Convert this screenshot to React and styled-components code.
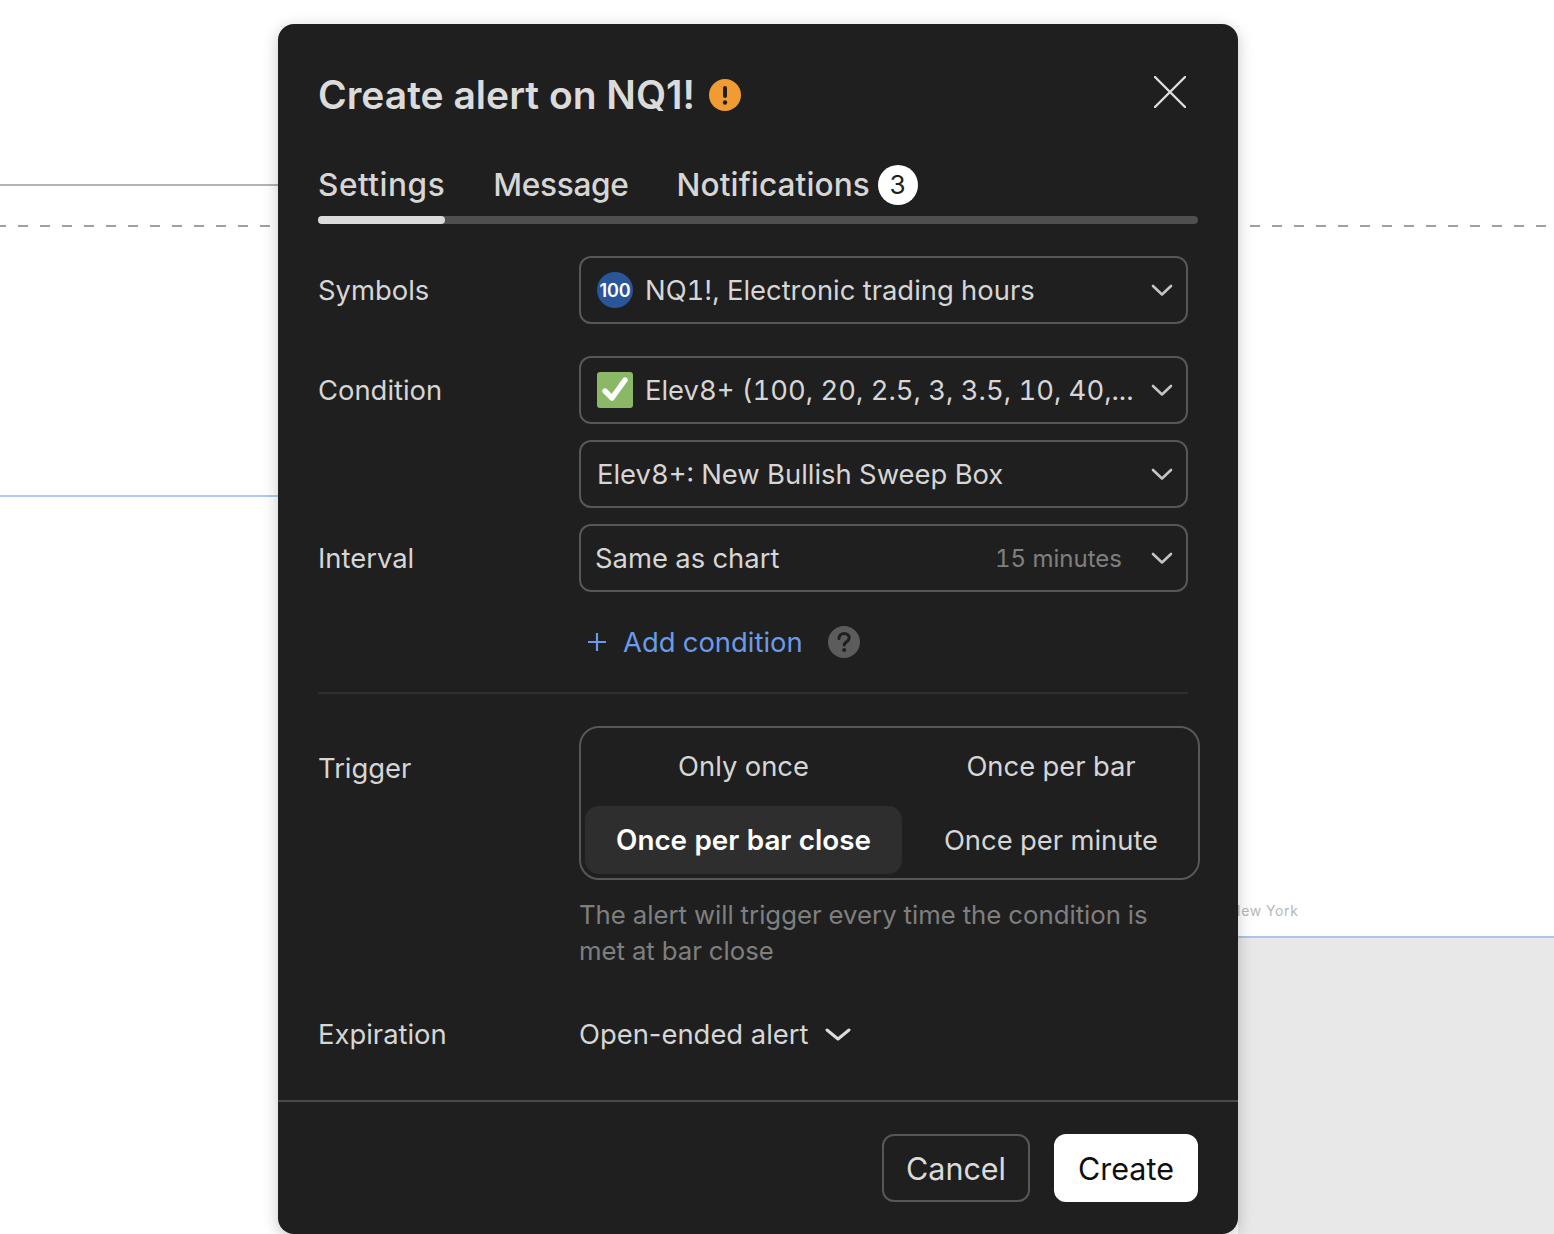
import React from 'react'
import styled, { createGlobalStyle } from 'styled-components'

const Global = createGlobalStyle`
  html, body { margin: 0; padding: 0; background: #fff; }
  body { font-family: Inter, "Noto Sans", sans-serif; font-feature-settings: "tnum"; }
  * { box-sizing: border-box; }
`

const Stage = styled.div`
  position: relative;
  width: 1554px;
  height: 1234px;
  overflow: hidden;
  background: #fff;
`

const ChartLine = styled.div`
  position: absolute;
  left: ${({ $x }) => $x}px;
  top: ${({ $y }) => $y}px;
  width: ${({ $w }) => $w}px;
  height: 2px;
  background: ${({ $color }) => $color};
`

const DashLine = styled.div`
  position: absolute;
  left: ${({ $x }) => $x}px;
  top: 225px;
  width: ${({ $w }) => $w}px;
  height: 2px;
  background: repeating-linear-gradient(90deg, #a0a0a0 0 10px, transparent 10px 22px);
  background-position: ${({ $off }) => $off}px 0;
`

const GreyArea = styled.div`
  position: absolute;
  left: 1238px;
  top: 938px;
  right: 0;
  bottom: 0;
  background: #e8e8e8;
`

const ChartLabel = styled.div`
  position: absolute;
  left: 1230px;
  top: 902px;
  font-size: 14px;
  line-height: 17px;
  letter-spacing: 0.6px;
  color: #b8b8b8;
`

const Modal = styled.div`
  position: absolute;
  left: 278px;
  top: 24px;
  width: 960px;
  height: 1210px;
  display: flex;
  flex-direction: column;
  background: #1f1f1f;
  border-radius: 16px;
  box-shadow: 0 4px 16px rgba(0, 0, 0, 0.22);
  color: #d6d6d6;
`

const Header = styled.div`
  display: flex;
  align-items: center;
  justify-content: space-between;
  height: 44px;
  margin-top: 49px;
  padding: 0 52px 0 40px;
`

const Title = styled.h1`
  display: flex;
  align-items: center;
  gap: 14px;
  margin: 0;
  font-size: 39px;
  line-height: 44px;
  font-weight: 600;
  font-feature-settings: normal;
  color: #dbdbdb;
`

const CloseIcon = styled.svg`
  display: block;
  width: 32px;
  height: 32px;
  margin-top: -6px;
`

const Tabs = styled.div`
  display: flex;
  align-items: center;
  gap: 48px;
  height: 40px;
  margin-top: 48px;
  padding-left: 40px;
`

const Tab = styled.span`
  display: flex;
  align-items: center;
  gap: 8px;
  font-size: 31.6px;
  line-height: 40px;
  font-weight: 500;
  letter-spacing: ${({ $track }) => $track || 0}px;
  color: #d6d6d6;
`

const Badge = styled.span`
  display: flex;
  align-items: center;
  justify-content: center;
  width: 40px;
  height: 40px;
  border-radius: 50%;
  background: #fff;
  color: #1f1f1f;
  font-size: 26px;
  font-weight: 400;
`

const Track = styled.div`
  width: 880px;
  height: 8px;
  margin: 11px 0 0 40px;
  border-radius: 4px;
  background: #4f4f4f;
`

const TrackFill = styled.div`
  width: 127px;
  height: 8px;
  border-radius: 4px;
  background: #dbdbdb;
`

const Form = styled.div`
  display: flex;
  flex-direction: column;
  padding: 32px 0 0 40px;
`

const Row = styled.div`
  display: flex;
  margin-top: ${({ $top }) => $top || 0}px;
`

const Label = styled.div`
  width: 261px;
  flex: none;
  font-size: 27.4px;
  line-height: ${({ $line }) => $line || 68}px;
  color: #d6d6d6;
`

const Select = styled.div`
  display: flex;
  align-items: center;
  gap: 12px;
  width: 609px;
  height: 68px;
  padding: 0 12px 0 ${({ $pad }) => $pad || 16}px;
  border: 2px solid #575757;
  border-radius: 12px;
  font-size: 27.4px;
  color: #d6d6d6;
`

const SelectText = styled.span`
  flex: 1;
  min-width: 0;
  white-space: nowrap;
`

const Hint = styled.span`
  margin-right: 16px;
  font-size: 24px;
  color: #7f7f7f;
`

const Chevron = styled.svg`
  flex: none;
  display: block;
  width: 24px;
  height: 24px;
`

const IndexBadge = styled.span`
  flex: none;
  display: flex;
  align-items: center;
  justify-content: center;
  width: 36px;
  height: 36px;
  border-radius: 50%;
  background: #2a5599;
  color: #fff;
  font-size: 18px;
  font-weight: 600;
  font-feature-settings: normal;
  letter-spacing: -0.2px;
`

const CheckIcon = styled.svg`
  flex: none;
  display: block;
  width: 36px;
  height: 36px;
`

const AddRow = styled.div`
  display: flex;
  align-items: center;
  height: 40px;
  margin: 30px 0 0 262px;
  padding-left: 6px;
  font-size: 27.4px;
  color: #6a9bea;
`

const PlusIcon = styled.svg`
  display: block;
  width: 22px;
  height: 22px;
  margin-right: 15px;
`

const HelpIcon = styled.svg`
  display: block;
  width: 32px;
  height: 32px;
  margin-left: 25px;
`

const Divider = styled.div`
  width: 870px;
  height: 2px;
  margin-top: 30px;
  background: #2e2e2e;
`

const Segments = styled.div`
  display: grid;
  grid-template-columns: 317px 1fr;
  gap: 6px;
  width: 621px;
  height: 154px;
  padding: 4px;
  border: 2px solid #575757;
  border-radius: 20px;
`

const Segment = styled.div`
  display: flex;
  align-items: center;
  justify-content: center;
  height: 68px;
  border-radius: 14px;
  font-size: ${({ $active }) => ($active ? 27.8 : 27.4)}px;
  font-weight: ${({ $active }) => ($active ? 600 : 400)};
  color: ${({ $active }) => ($active ? '#fff' : '#d6d6d6')};
  background: ${({ $active }) => ($active ? '#2e2e2e' : 'transparent')};
`

const HelpText = styled.p`
  width: 600px;
  margin: 17px 0 0;
  font-size: 25.75px;
  line-height: 36px;
  color: #7f7f7f;
`

const ExpireValue = styled.div`
  display: flex;
  align-items: center;
  gap: 16px;
  font-size: 27.4px;
  line-height: 40px;
  font-feature-settings: normal;
  color: #d6d6d6;
`

const ExpireChevron = styled.svg`
  display: block;
  width: 26px;
  height: 26px;
`

const Footer = styled.div`
  display: flex;
  justify-content: flex-end;
  gap: 24px;
  margin-top: auto;
  height: 134px;
  padding: 32px 40px 0 0;
  border-top: 2px solid #4a4a4a;
`

const Button = styled.div`
  display: flex;
  align-items: center;
  justify-content: center;
  height: 68px;
  width: ${({ $w }) => $w}px;
  border-radius: 12px;
  border: 2px solid ${({ $primary }) => ($primary ? '#fff' : '#575757')};
  background: ${({ $primary }) => ($primary ? '#fff' : 'transparent')};
  color: ${({ $primary }) => ($primary ? '#0f0f0f' : '#dbdbdb')};
  font-size: 30.5px;
`

const Down = () => (
  <Chevron viewBox="0 0 24 24" fill="none" stroke="#c4c4c4" strokeWidth="2.6" strokeLinecap="round" strokeLinejoin="round">
    <path d="M3 8l9 8.500L21 8" />
  </Chevron>
)

const App = () => {
  return (
    <Stage>
      <Global />
      <ChartLine $x={0} $y={184} $w={278} $color="#b4b4b4" />
      <ChartLine $x={0} $y={495} $w={278} $color="#b0c8f2" />
      <DashLine $x={0} $w={270} $off={-4} />
      <DashLine $x={1250} $w={304} $off={0} />
      <ChartLabel>New York</ChartLabel>
      <GreyArea />
      <ChartLine $x={1238} $y={936} $w={316} $color="#aec4e8" />

      <Modal>
        <Header>
          <Title>
            Create alert on NQ1!
            <svg width="32" height="32" viewBox="0 0 32 32">
              <circle cx="16" cy="16" r="16" fill="#f09c33" />
              <rect x="14" y="7" width="4" height="12" rx="2" fill="#1f1f1f" />
              <circle cx="16" cy="23.500" r="2.200" fill="#1f1f1f" />
            </svg>
          </Title>
          <CloseIcon viewBox="0 0 32 32" fill="none" stroke="#dedede" strokeWidth="2.400" strokeLinecap="round">
            <path d="M1 1l30 30M31 1L1 31" />
          </CloseIcon>
        </Header>

        <Tabs>
          <Tab $track={0.5}>Settings</Tab>
          <Tab $track={-0.3}>Message</Tab>
          <Tab $track={0.1}>Notifications<Badge>3</Badge></Tab>
        </Tabs>
        <Track><TrackFill /></Track>

        <Form>
          <Row>
            <Label>Symbols</Label>
            <Select>
              <IndexBadge>100</IndexBadge>
              <SelectText>NQ1!, Electronic trading hours</SelectText>
              <Down />
            </Select>
          </Row>

          <Row $top={32}>
            <Label>Condition</Label>
            <Select>
              <CheckIcon viewBox="0 0 36 36">
                <rect width="36" height="36" rx="3" fill="#8ab866" />
                <path d="M8 19l7 7L28 8" fill="none" stroke="#fff" strokeWidth="5.400" strokeLinecap="round" strokeLinejoin="round" />
              </CheckIcon>
              <SelectText>Elev8+ (100, 20, 2.5, 3, 3.5, 10, 40,...</SelectText>
              <Down />
            </Select>
          </Row>

          <Row $top={16}>
            <Label />
            <Select>
              <SelectText>Elev8+: New Bullish Sweep Box</SelectText>
              <Down />
            </Select>
          </Row>

          <Row $top={16}>
            <Label>Interval</Label>
            <Select $pad={14}>
              <SelectText>Same as chart</SelectText>
              <Hint>15 minutes</Hint>
              <Down />
            </Select>
          </Row>

          <AddRow>
            <PlusIcon viewBox="0 0 22 22" fill="none" stroke="#6a9bea" strokeWidth="2.200">
              <path d="M11 2v18M2 11h18" />
            </PlusIcon>
            Add condition
            <HelpIcon viewBox="0 0 32 32">
              <circle cx="16" cy="16" r="16" fill="#5c5c5c" />
              <path d="M11 12.500c0-3 2.300-5 5.200-5 2.800 0 5 1.800 5 4.400 0 3.600-5 3.900-5 7.100" fill="none" stroke="#1f1f1f" strokeWidth="3" strokeLinecap="round" />
              <circle cx="16.200" cy="24" r="2" fill="#1f1f1f" />
            </HelpIcon>
          </AddRow>

          <Divider />

          <Row $top={32}>
            <Label $line={84}>Trigger</Label>
            <Segments>
              <Segment>Only once</Segment>
              <Segment>Once per bar</Segment>
              <Segment $active>Once per bar close</Segment>
              <Segment>Once per minute</Segment>
            </Segments>
          </Row>

          <Row>
            <Label $line={36} />
            <HelpText>The alert will trigger every time the condition is met at bar close</HelpText>
          </Row>

          <Row $top={45}>
            <Label $line={40}>Expiration</Label>
            <ExpireValue>
              Open-ended alert
              <ExpireChevron viewBox="0 0 26 26" fill="none" stroke="#dcdcdc" strokeWidth="3" strokeLinecap="round" strokeLinejoin="round">
                <path d="M2 9l11 9 11-9" />
              </ExpireChevron>
            </ExpireValue>
          </Row>
        </Form>

        <Footer>
          <Button $w={148}>Cancel</Button>
          <Button $w={144} $primary>Create</Button>
        </Footer>
      </Modal>
    </Stage>
  )
}

export default App
